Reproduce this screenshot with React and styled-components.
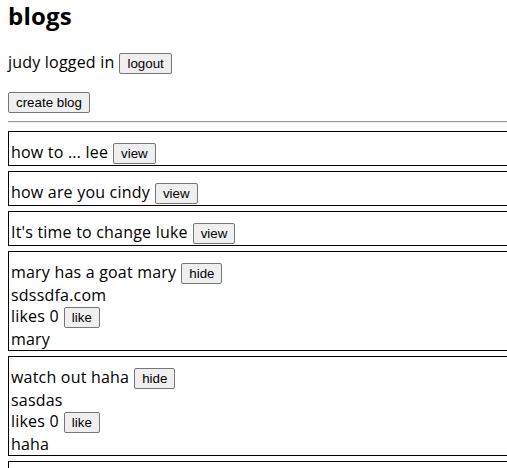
import React from "react";
import styled, { createGlobalStyle } from "styled-components";

const Global = createGlobalStyle`
  html { overflow: hidden; background: #fff; }
  body {
    margin: 0;
    padding: 0 8px;
    font-family: "Open Sans", "Noto Sans", sans-serif;
    font-size: 16px;
    line-height: 21px;
    letter-spacing: 0.2px;
    color: #000;
  }
`;

const Title = styled.h2`
  margin: 0 0 20px;
  font-size: 24px;
  font-weight: 700;
  line-height: 32px;
`;

const Line = styled.p`
  margin: 0 0 ${(p) => p.$gap || 0}px;
`;

const Button = styled.button`
  font-family: "Liberation Sans", Arial, sans-serif;
  font-size: 13.333px;
  line-height: 17px;
  letter-spacing: 0;
  color: #000;
  background: #efefef;
  border: 1px solid #767676;
  border-radius: 2px;
  padding: 1px 7px;
  margin: 0 0 ${(p) => (p.$inline ? 1 : 0)}px ${(p) => (p.$inline ? 5 : 0)}px;
`;

const Rule = styled.hr`
  margin: 8px -8px 8px 0;
  border: 0;
  border-top: 1px solid #9a9a9a;
  border-bottom: 1px solid #eeeeee;
`;

const BlogBox = styled.div`
  border: 1px solid #000;
  padding: 10px 0 0 2px;
  margin: 0 -120px 5px 0;
`;

const blogs = [
  { title: "how to ...", author: "lee" },
  { title: "how are you", author: "cindy" },
  { title: "It's time to change", author: "luke" },
  { title: "mary has a goat", author: "mary", url: "sdssdfa.com", likes: 0, user: "mary", open: true },
  { title: "watch out", author: "haha", url: "sasdas", likes: 0, user: "haha", open: true },
  { title: "", author: "" },
];

const Blog = ({ blog }) => (
  <BlogBox>
    {blog.title && (
      <div>
        {blog.title} {blog.author}
        <Button $inline>{blog.open ? "hide" : "view"}</Button>
      </div>
    )}
    {blog.open && (
      <>
        <div>{blog.url}</div>
        <div>
          likes {blog.likes}
          <Button $inline>like</Button>
        </div>
        <div>{blog.user}</div>
      </>
    )}
  </BlogBox>
);

export default function App() {
  return (
    <>
      <Global />
      <Title>blogs</Title>
      <Line $gap={16}>
        judy logged in<Button $inline>logout</Button>
      </Line>
      <div>
        <Button>create blog</Button>
      </div>
      <Rule />
      {blogs.map((b, i) => (
        <Blog key={i} blog={b} />
      ))}
    </>
  );
}
